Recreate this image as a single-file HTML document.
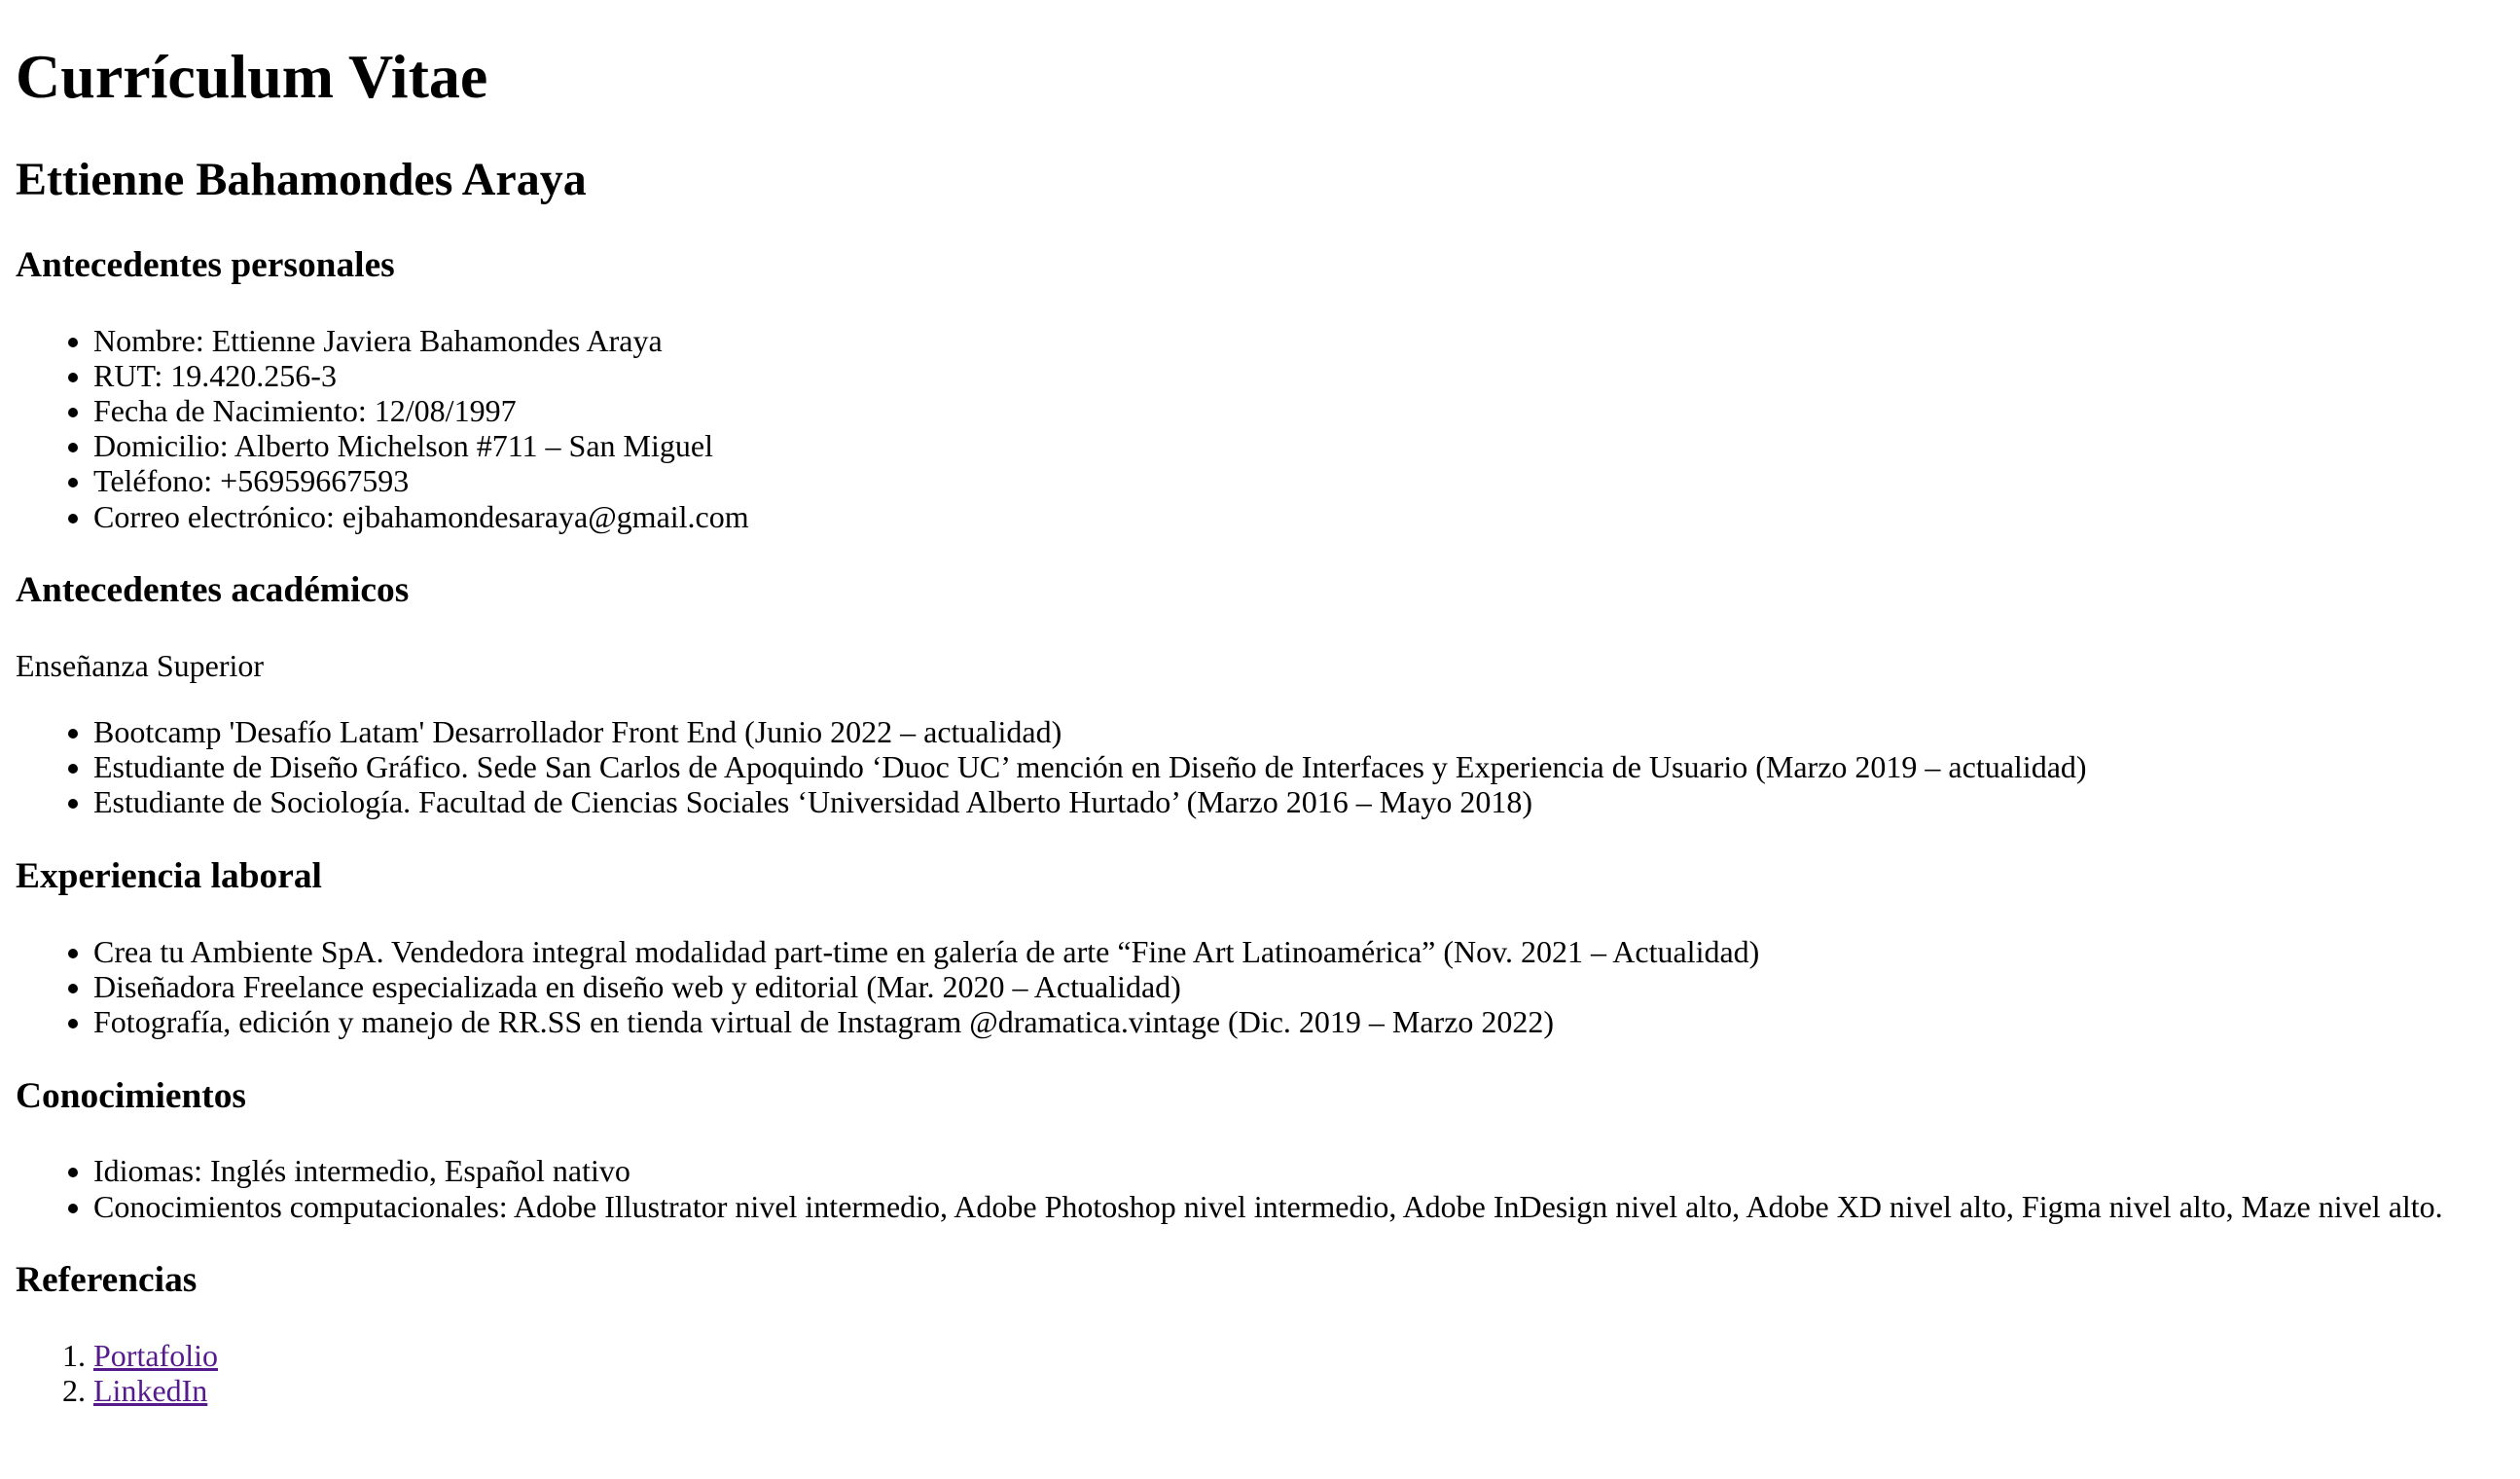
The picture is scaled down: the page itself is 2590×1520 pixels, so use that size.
<!DOCTYPE html>
<html lang="es">
<head>
<meta charset="utf-8">
<title>Currículum Vitae</title>
<style>
html{zoom:2;background:#fff;}
body{margin:8px;font-family:"Liberation Serif","Times New Roman",serif;font-size:16px;color:#000;line-height:1.13;}
h1{font-size:2em;margin:0.67em 0;line-height:1.13;}
h2{font-size:1.5em;margin:0.83em 0;line-height:1.13;}
h3{font-size:1.17em;margin:1em 0;line-height:1.13;}
p{margin:1em 0;}
ul,ol{margin:1em 0;padding-left:40px;}
a{color:#551a8b;}
</style>
</head>
<body>
<h1>Currículum Vitae</h1>
<h2>Ettienne Bahamondes Araya</h2>
<h3>Antecedentes personales</h3>
<ul>
<li>Nombre: Ettienne Javiera Bahamondes Araya</li>
<li>RUT: 19.420.256-3</li>
<li>Fecha de Nacimiento: 12/08/1997</li>
<li>Domicilio: Alberto Michelson #711 – San Miguel</li>
<li>Teléfono: +56959667593</li>
<li>Correo electrónico: ejbahamondesaraya@gmail.com</li>
</ul>
<h3>Antecedentes académicos</h3>
<p>Enseñanza Superior</p>
<ul>
<li>Bootcamp 'Desafío Latam' Desarrollador Front End (Junio 2022 – actualidad)</li>
<li>Estudiante de Diseño Gráfico. Sede San Carlos de Apoquindo ‘Duoc UC’ mención en Diseño de Interfaces y Experiencia de Usuario (Marzo 2019 – actualidad)</li>
<li>Estudiante de Sociología. Facultad de Ciencias Sociales ‘Universidad Alberto Hurtado’ (Marzo 2016 – Mayo 2018)</li>
</ul>
<h3>Experiencia laboral</h3>
<ul>
<li>Crea tu Ambiente SpA. Vendedora integral modalidad part-time en galería de arte “Fine Art Latinoamérica” (Nov. 2021 – Actualidad)</li>
<li>Diseñadora Freelance especializada en diseño web y editorial (Mar. 2020 – Actualidad)</li>
<li>Fotografía, edición y manejo de RR.SS en tienda virtual de Instagram @dramatica.vintage (Dic. 2019 – Marzo 2022)</li>
</ul>
<h3>Conocimientos</h3>
<ul>
<li>Idiomas: Inglés intermedio, Español nativo</li>
<li>Conocimientos computacionales: Adobe Illustrator nivel intermedio, Adobe Photoshop nivel intermedio, Adobe InDesign nivel alto, Adobe XD nivel alto, Figma nivel alto, Maze nivel alto.</li>
</ul>
<h3>Referencias</h3>
<ol>
<li><a href="#">Portafolio</a></li>
<li><a href="#">LinkedIn</a></li>
</ol>
</body>
</html>
